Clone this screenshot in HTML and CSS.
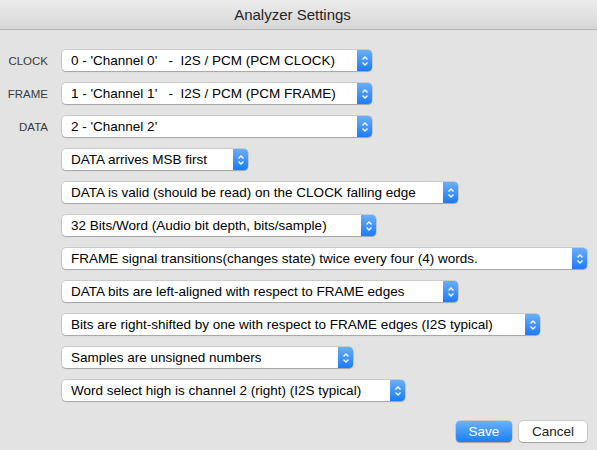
FILE: index.html
```html
<!DOCTYPE html>
<html>
<head>
<meta charset="utf-8">
<link rel="stylesheet" href="styles.css">
</head>
<body>
<div class="window">
  <div class="titlebar">Analyzer Settings</div>
  <div class="content">
    <div class="row"><span class="label">CLOCK</span><div class="popup w372"><span class="txt">0 - 'Channel 0' &nbsp;&nbsp;- &nbsp;I2S / PCM (PCM CLOCK)</span><span class="arrow"><svg width="8" height="12" viewBox="0 0 8 12"><path d="M1.5 4.5 L4 2 L6.5 4.5 M1.5 7.5 L4 10 L6.5 7.5" fill="none" stroke="#fff" stroke-width="1.3"/></svg></span></div></div>
    <div class="row"><span class="label">FRAME</span><div class="popup w372"><span class="txt">1 - 'Channel 1' &nbsp;&nbsp;- &nbsp;I2S / PCM (PCM FRAME)</span><span class="arrow"><svg width="8" height="12" viewBox="0 0 8 12"><path d="M1.5 4.5 L4 2 L6.5 4.5 M1.5 7.5 L4 10 L6.5 7.5" fill="none" stroke="#fff" stroke-width="1.3"/></svg></span></div></div>
    <div class="row"><span class="label">DATA</span><div class="popup w372"><span class="txt">2 - 'Channel 2'</span><span class="arrow"><svg width="8" height="12" viewBox="0 0 8 12"><path d="M1.5 4.5 L4 2 L6.5 4.5 M1.5 7.5 L4 10 L6.5 7.5" fill="none" stroke="#fff" stroke-width="1.3"/></svg></span></div></div>
    <div class="row"><span class="label"></span><div class="popup w248"><span class="txt">DATA arrives MSB first</span><span class="arrow"><svg width="8" height="12" viewBox="0 0 8 12"><path d="M1.5 4.5 L4 2 L6.5 4.5 M1.5 7.5 L4 10 L6.5 7.5" fill="none" stroke="#fff" stroke-width="1.3"/></svg></span></div></div>
    <div class="row"><span class="label"></span><div class="popup w458"><span class="txt">DATA is valid (should be read) on the CLOCK falling edge</span><span class="arrow"><svg width="8" height="12" viewBox="0 0 8 12"><path d="M1.5 4.5 L4 2 L6.5 4.5 M1.5 7.5 L4 10 L6.5 7.5" fill="none" stroke="#fff" stroke-width="1.3"/></svg></span></div></div>
    <div class="row"><span class="label"></span><div class="popup w376"><span class="txt">32 Bits/Word (Audio bit depth, bits/sample)</span><span class="arrow"><svg width="8" height="12" viewBox="0 0 8 12"><path d="M1.5 4.5 L4 2 L6.5 4.5 M1.5 7.5 L4 10 L6.5 7.5" fill="none" stroke="#fff" stroke-width="1.3"/></svg></span></div></div>
    <div class="row"><span class="label"></span><div class="popup w587"><span class="txt">FRAME signal transitions(changes state) twice every four (4) words.</span><span class="arrow"><svg width="8" height="12" viewBox="0 0 8 12"><path d="M1.5 4.5 L4 2 L6.5 4.5 M1.5 7.5 L4 10 L6.5 7.5" fill="none" stroke="#fff" stroke-width="1.3"/></svg></span></div></div>
    <div class="row"><span class="label"></span><div class="popup w458"><span class="txt">DATA bits are left-aligned with respect to FRAME edges</span><span class="arrow"><svg width="8" height="12" viewBox="0 0 8 12"><path d="M1.5 4.5 L4 2 L6.5 4.5 M1.5 7.5 L4 10 L6.5 7.5" fill="none" stroke="#fff" stroke-width="1.3"/></svg></span></div></div>
    <div class="row"><span class="label"></span><div class="popup w540"><span class="txt">Bits are right-shifted by one with respect to FRAME edges (I2S typical)</span><span class="arrow"><svg width="8" height="12" viewBox="0 0 8 12"><path d="M1.5 4.5 L4 2 L6.5 4.5 M1.5 7.5 L4 10 L6.5 7.5" fill="none" stroke="#fff" stroke-width="1.3"/></svg></span></div></div>
    <div class="row"><span class="label"></span><div class="popup w353"><span class="txt">Samples are unsigned numbers</span><span class="arrow"><svg width="8" height="12" viewBox="0 0 8 12"><path d="M1.5 4.5 L4 2 L6.5 4.5 M1.5 7.5 L4 10 L6.5 7.5" fill="none" stroke="#fff" stroke-width="1.3"/></svg></span></div></div>
    <div class="row"><span class="label"></span><div class="popup w405"><span class="txt">Word select high is channel 2 (right) (I2S typical)</span><span class="arrow"><svg width="8" height="12" viewBox="0 0 8 12"><path d="M1.5 4.5 L4 2 L6.5 4.5 M1.5 7.5 L4 10 L6.5 7.5" fill="none" stroke="#fff" stroke-width="1.3"/></svg></span></div></div>
    <div class="buttons">
      <button class="btn primary">Save</button>
      <button class="btn">Cancel</button>
    </div>
  </div>
</div>
</body>
</html>
```
FILE: styles.css
```css
html, body {
  margin: 0;
  padding: 0;
  background: #e3e3e3;
}
.window {
  width: 597px;
  height: 450px;
  font-family: "Liberation Sans", Arial, sans-serif;
  font-size: 13.5px;
  color: #000;
  background: #e3e3e3;
  overflow: hidden;
}
.titlebar {
  box-sizing: border-box;
  height: 30px;
  line-height: 29px;
  padding-right: 12px;
  text-align: center;
  font-size: 15px;
  color: #262626;
  background: linear-gradient(#ececec, #d6d6d6);
  border-bottom: 1px solid #b4b4b4;
}
.content {
  display: flex;
  flex-direction: column;
  gap: 12px;
  padding-top: 20px;
}
.row {
  display: flex;
  align-items: center;
  height: 21px;
}
.label {
  width: 48px;
  margin-right: 14px;
  text-align: right;
  font-size: 11.5px;
  color: #3a3a3a;
}
.popup {
  box-sizing: border-box;
  height: 21px;
  display: flex;
  align-items: stretch;
  background: #fff;
  border-radius: 4px;
  box-shadow: 0 0 0 0.5px rgba(0,0,0,0.22), 0 1px 1px rgba(0,0,0,0.18);
}
.txt {
  flex: 1;
  padding-left: 9px;
  line-height: 21px;
  white-space: pre;
  overflow: hidden;
}
.arrow {
  width: 15px;
  display: flex;
  align-items: center;
  justify-content: center;
  background: linear-gradient(#6aaefb, #1b7cf6);
  border-radius: 0 4px 4px 0;
}
.w372 { width: 310px; }
.w248 { width: 186px; }
.w458 { width: 396px; }
.w376 { width: 314px; }
.w587 { width: 525px; }
.w540 { width: 478px; }
.w353 { width: 291px; }
.w405 { width: 343px; }
.buttons {
  display: flex;
  justify-content: flex-end;
  gap: 7px;
  padding-right: 10px;
  margin-top: 8px;
}
.btn {
  box-sizing: border-box;
  height: 21px;
  font-family: "Liberation Sans", Arial, sans-serif;
  font-size: 13.5px;
  color: #222;
  background: #fff;
  border: none;
  border-radius: 4px;
  box-shadow: 0 0 0 0.5px rgba(0,0,0,0.22), 0 1px 1px rgba(0,0,0,0.18);
  padding: 0;
  width: 68px;
}
.btn.primary {
  width: 56px;
  color: #fff;
  background: linear-gradient(#69b1fb, #1a80f6);
}
```
